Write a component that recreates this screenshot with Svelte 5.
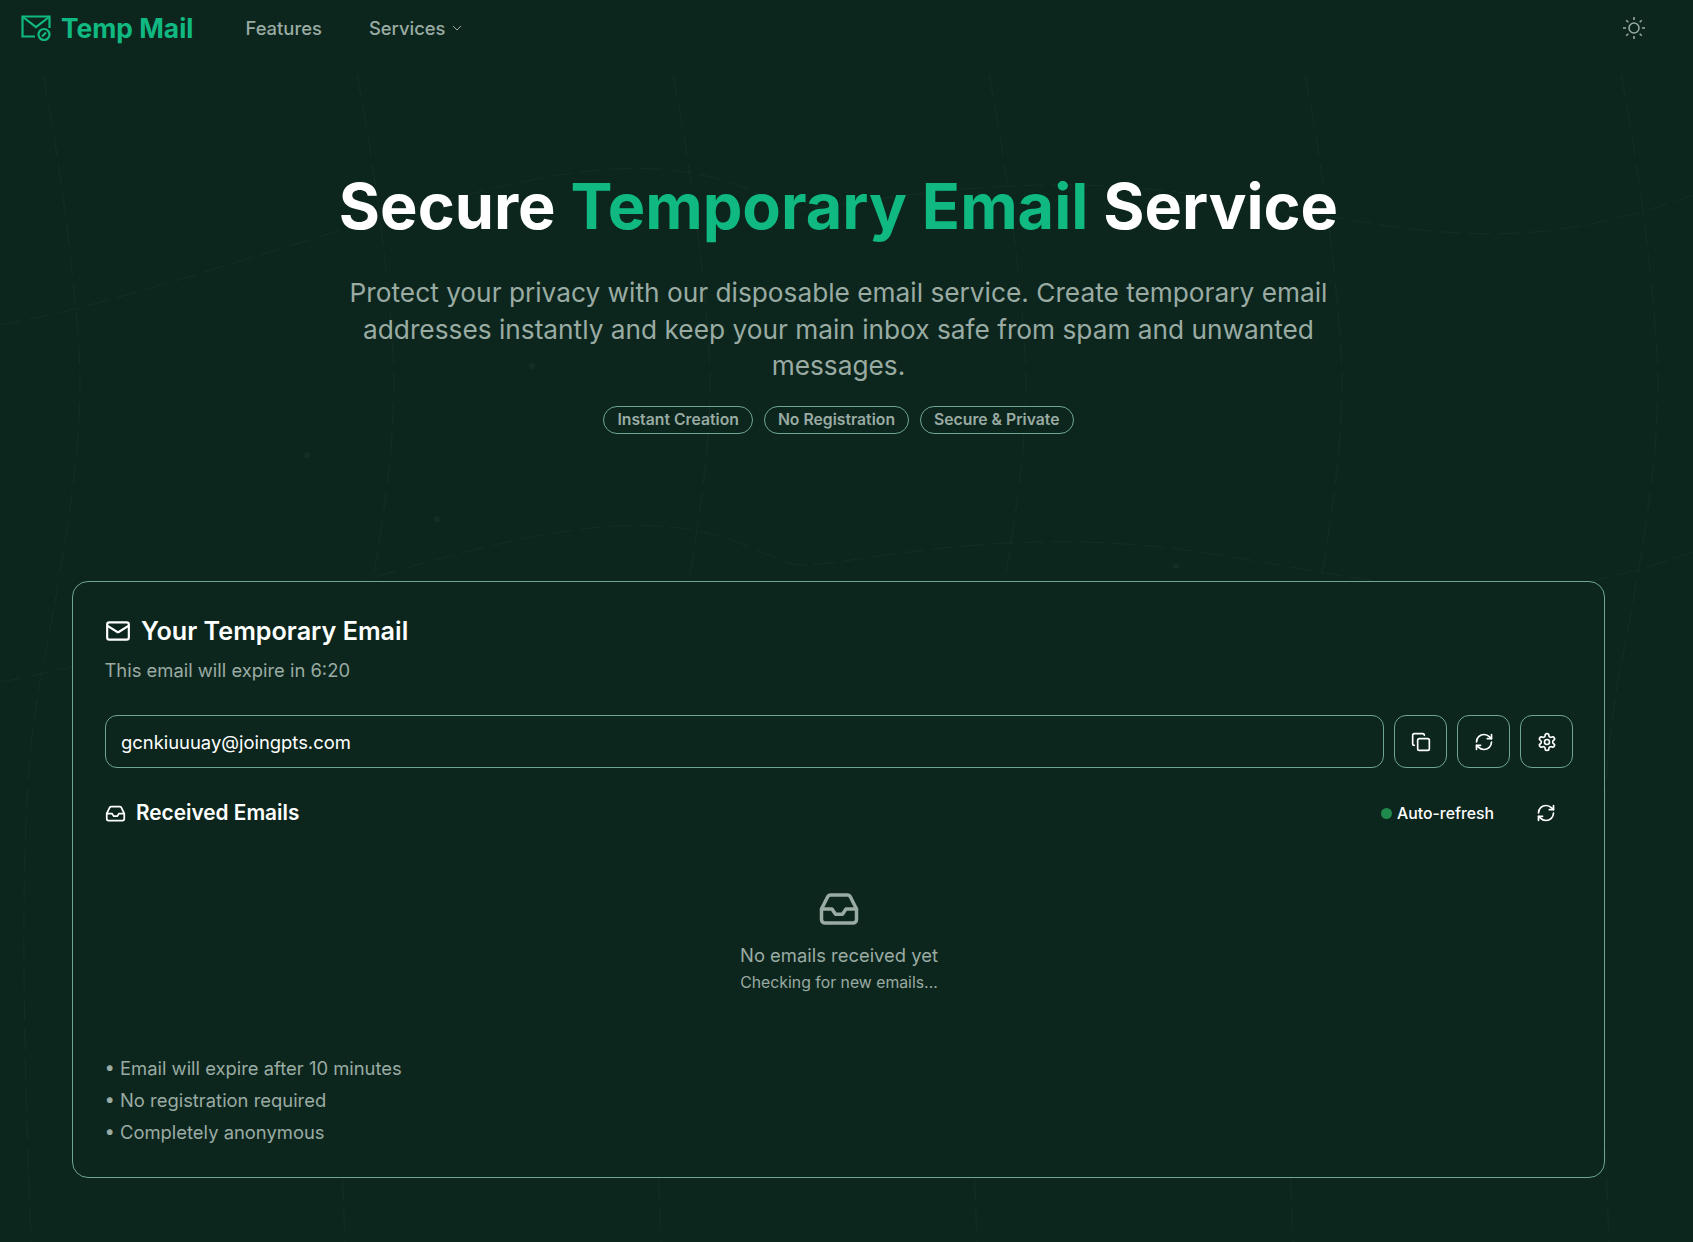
<script lang="ts">
	// faint contour lines behind the hero: one vertical shape repeated every 316px
	const columns = [43, 357, 673, 989, 1305, 1621]
	const rows = [325, 682]
	const points = [[532, 366], [307, 455], [437, 519], [1176, 566], [305, 655]]
	const tags = ["Instant Creation", "No Registration", "Secure & Private"]
	const notes = ["Email will expire after 10 minutes", "No registration required", "Completely anonymous"]
</script>

{#snippet refresh()}
	<svg class="ico" viewBox="0 0 24 24"><path d="M3 12a9 9 0 0 1 9-9 9.75 9.75 0 0 1 6.74 2.74L21 8"/><path d="M21 3v5h-5"/><path d="M21 12a9 9 0 0 1-9 9 9.75 9.75 0 0 1-6.74-2.74L3 16"/><path d="M8 16H3v5"/></svg>
{/snippet}

{#snippet inbox(cls)}
	<svg class={cls} viewBox="0 0 24 24"><path d="M22 12h-6l-2 3h-4l-2-3H2"/><path d="M5.45 5.11 2 12v6a2 2 0 0 0 2 2h16a2 2 0 0 0 2-2v-6l-3.45-6.89A2 2 0 0 0 16.76 4H7.24a2 2 0 0 0-1.79 1.11z"/></svg>
{/snippet}

<div class="page">
	<svg class="backdrop" viewBox="0 0 1693 1242" preserveAspectRatio="none" aria-hidden="true">
		{#each columns as x}
			<path d="M{x} 75 C {x + 15} 150, {x + 30} 260, {x + 36} 350 S {x + 20} 560, {x + 5} 640 S {x - 30} 780, {x - 12} 1242" />
		{/each}
		{#each rows as y}
			<path d="M0 {y} C 150 {y - 25}, 400 {y - 125}, 560 {y - 150} S 760 {y - 120}, 800 {y - 117} S 1000 {y - 160}, 1200 {y - 130} S 1500 {y - 60}, 1693 {y - 130}" />
		{/each}
		{#each points as [cx, cy]}
			<circle {cx} {cy} r="3" />
		{/each}
	</svg>

	<nav>
		<div class="left">
			<a class="brand" href="#top">
				<svg class="logo" viewBox="0 0 30 26">
					<path d="M14 21.500H1.500V1.500h27V13"/>
					<path d="M2 2l13 10L28 2"/>
					<circle cx="23" cy="19.500" r="5.500"/>
					<path d="M21 21.500l4-4"/>
				</svg>
				<span>Temp Mail</span>
			</a>
			<a class="link" href="#features">Features</a>
			<a class="link" href="#services">Services
				<svg class="chev" viewBox="0 0 24 24"><path d="m6 9 6 6 6-6"/></svg>
			</a>
		</div>
		<svg class="sun" viewBox="0 0 24 24">
			<circle cx="12" cy="12" r="5"/>
			<path d="M12 1v3M12 20v3M1 12h3M20 12h3M4.200 4.200l2.100 2.100M17.700 17.700l2.100 2.100M4.200 19.800l2.100-2.100M17.700 6.300l2.100-2.100"/>
		</svg>
	</nav>

	<header class="hero">
		<h1>Secure <em>Temporary Email</em> Service</h1>
		<p>Protect your privacy with our disposable email service. Create temporary email addresses instantly and keep your main inbox safe from spam and unwanted messages.</p>
		<div class="tags">
			{#each tags as t}
				<span class="tag">{t}</span>
			{/each}
		</div>
	</header>

	<main class="card">
		<div class="title">
			<svg class="mail" viewBox="0 0 24 24"><rect x="2" y="4" width="20" height="16" rx="2"/><path d="m22 7-8.970 5.700a1.940 1.940 0 0 1-2.060 0L2 7"/></svg>
			<h2>Your Temporary Email</h2>
		</div>
		<div class="expire">This email will expire in 6:20</div>

		<div class="address">
			<input value="gcnkiuuuay@joingpts.com" readonly />
			<button aria-label="Copy">
				<svg class="ico" viewBox="0 0 24 24"><rect x="8" y="8" width="14" height="14" rx="2"/><path d="M4 16c-1.100 0-2-.9-2-2V4c0-1.100.9-2 2-2h10c1.100 0 2 .9 2 2"/></svg>
			</button>
			<button aria-label="New address">{@render refresh()}</button>
			<button aria-label="Settings">
				<svg class="ico" viewBox="0 0 24 24"><path d="M12.220 2h-.44a2 2 0 0 0-2 2v.18a2 2 0 0 1-1 1.730l-.43.250a2 2 0 0 1-2 0l-.15-.080a2 2 0 0 0-2.730.730l-.22.380a2 2 0 0 0 .730 2.730l.15.100a2 2 0 0 1 1 1.720v.51a2 2 0 0 1-1 1.740l-.15.090a2 2 0 0 0-.730 2.730l.22.380a2 2 0 0 0 2.730.730l.15-.080a2 2 0 0 1 2 0l.43.250a2 2 0 0 1 1 1.730V20a2 2 0 0 0 2 2h.44a2 2 0 0 0 2-2v-.18a2 2 0 0 1 1-1.730l.43-.250a2 2 0 0 1 2 0l.15.080a2 2 0 0 0 2.730-.730l.22-.390a2 2 0 0 0-.730-2.730l-.15-.080a2 2 0 0 1-1-1.740v-.5a2 2 0 0 1 1-1.740l.15-.090a2 2 0 0 0 .730-2.730l-.22-.380a2 2 0 0 0-2.730-.730l-.15.080a2 2 0 0 1-2 0l-.43-.250a2 2 0 0 1-1-1.730V4a2 2 0 0 0-2-2z"/><circle cx="12" cy="12" r="3"/></svg>
			</button>
		</div>

		<div class="received">
			<div class="rtitle">
				{@render inbox("box")}
				<h3>Received Emails</h3>
			</div>
			<div class="auto">
				<i class="dot"></i>
				<span>Auto-refresh</span>
				<span class="again">{@render refresh()}</span>
			</div>
		</div>

		<div class="empty">
			{@render inbox("bigbox")}
			<div class="none">No emails received yet</div>
			<div class="check">Checking for new emails...</div>
		</div>

		<ul>
			{#each notes as n}
				<li>• {n}</li>
			{/each}
		</ul>
	</main>
</div>

<style>
	:global(body) {
		margin: 0;
		background: #0c261d;
	}
	.page {
		position: relative;
		height: 1242px;
		overflow: hidden;
		font-family: Inter, "Noto Sans", sans-serif;
		color: #fff;
		background: #0c261d;
	}
	.backdrop {
		position: absolute;
		inset: 0;
		width: 100%;
		height: 100%;
		pointer-events: none;
	}
	.backdrop path {
		fill: none;
		stroke: #fff;
		stroke-opacity: 0.035;
		stroke-width: 1;
		stroke-dasharray: 22 8;
	}
	.backdrop circle {
		fill: #fff;
		fill-opacity: 0.04;
	}
	nav {
		position: relative;
		display: flex;
		align-items: center;
		justify-content: space-between;
		height: 56px;
		padding: 0 47px 0 21px;
	}
	.left {
		display: flex;
		align-items: center;
	}
	.brand {
		display: flex;
		align-items: center;
		gap: 10px;
		margin-right: 52px;
		color: #10b981;
		font-size: 26.400px;
		font-weight: 700;
		text-decoration: none;
	}
	.logo {
		width: 30px;
		height: 26px;
		fill: none;
		stroke: #10b981;
		stroke-width: 2.200;
	}
	.link {
		display: flex;
		align-items: center;
		gap: 4px;
		margin-right: 47px;
		color: #9aaba3;
		font-size: 18.400px;
		font-weight: 500;
		text-decoration: none;
	}
	.chev {
		width: 16px;
		height: 16px;
		fill: none;
		stroke: #9aaba3;
		stroke-width: 1.500;
	}
	.sun {
		width: 24px;
		height: 24px;
		fill: none;
		stroke: #9aaba3;
		stroke-width: 1.500;
	}
	.hero {
		position: relative;
		display: flex;
		flex-direction: column;
		align-items: center;
		width: 1677px;
		padding-top: 119px;
		text-align: center;
	}
	h1 {
		margin: 0;
		font-size: 63px;
		line-height: 63px;
		font-weight: 700;
	}
	h1 em {
		font-style: normal;
		color: #10b981;
	}
	.hero p {
		max-width: 1024px;
		margin: 37px 0 0;
		font-size: 26.250px;
		line-height: 36.700px;
		color: #9aaba3;
	}
	.tags {
		display: flex;
		gap: 11px;
		margin-top: 21px;
	}
	.tag {
		padding: 0 13px;
		height: 26px;
		line-height: 26px;
		border: 1px solid #6fa68f;
		border-radius: 14px;
		font-size: 15.750px;
		font-weight: 600;
		color: #9aaba3;
	}
	.card {
		position: relative;
		width: 1533px;
		height: 597px;
		box-sizing: border-box;
		margin: 147px 0 0 72px;
		padding: 33px 31px 32px 32px;
		border: 1px solid #6fa68f;
		border-radius: 16px;
		background: #0c261d;
	}
	.title {
		display: flex;
		align-items: center;
		gap: 10px;
	}
	h2 {
		margin: 0;
		font-size: 25.200px;
		line-height: 32px;
		font-weight: 600;
	}
	.mail {
		width: 26px;
		height: 26px;
		fill: none;
		stroke: #fff;
		stroke-width: 2;
	}
	.expire {
		margin-top: 9px;
		margin-left: -0.5px;
		font-size: 18.400px;
		line-height: 28px;
		color: #9aaba3;
	}
	.address {
		display: flex;
		gap: 10px;
		margin-top: 31px;
	}
	input {
		flex: 1;
		height: 53px;
		box-sizing: border-box;
		padding: 0 15px;
		border: 1px solid #6fa68f;
		border-radius: 12px;
		background: transparent;
		color: #fff;
		font: 400 18.400px Inter, sans-serif;
		outline: none;
	}
	button {
		display: flex;
		align-items: center;
		justify-content: center;
		width: 53px;
		height: 53px;
		padding: 0;
		border: 1px solid #6fa68f;
		border-radius: 12px;
		background: transparent;
	}
	.ico {
		display: block;
		width: 20px;
		height: 20px;
		fill: none;
		stroke: #fff;
		stroke-width: 2;
		stroke-linecap: round;
		stroke-linejoin: round;
	}
	.received {
		display: flex;
		align-items: center;
		justify-content: space-between;
		margin-top: 31px;
	}
	.rtitle {
		display: flex;
		align-items: center;
		gap: 10px;
	}
	.box {
		width: 21px;
		height: 21px;
		fill: none;
		stroke: #fff;
		stroke-width: 2;
	}
	h3 {
		margin: 0;
		font-size: 20.800px;
		line-height: 28px;
		font-weight: 600;
	}
	.auto {
		display: flex;
		align-items: center;
		font-size: 15.800px;
		font-weight: 500;
	}
	.dot {
		width: 11px;
		height: 11px;
		margin-right: 5px;
		border-radius: 50%;
		background: #1f8a4c;
	}
	.again {
		margin: 0 17px 0 42px;
	}
	.empty {
		display: flex;
		flex-direction: column;
		align-items: center;
		margin-top: 61px;
	}
	.bigbox {
		width: 42px;
		height: 42px;
		fill: none;
		stroke: #9aaba3;
		stroke-width: 2;
		stroke-linecap: round;
		stroke-linejoin: round;
	}
	.none {
		margin-top: 11px;
		font-size: 18.400px;
		line-height: 28px;
		color: #9aaba3;
	}
	.check {
		margin-top: 2px;
		font-size: 15.800px;
		line-height: 24px;
		color: #9aaba3;
	}
	ul {
		margin: 58px 0 0;
		margin-left: -0.5px;
		padding: 0;
		list-style: none;
		font-size: 18.400px;
		line-height: 31.800px;
		color: #9aaba3;
	}
</style>
